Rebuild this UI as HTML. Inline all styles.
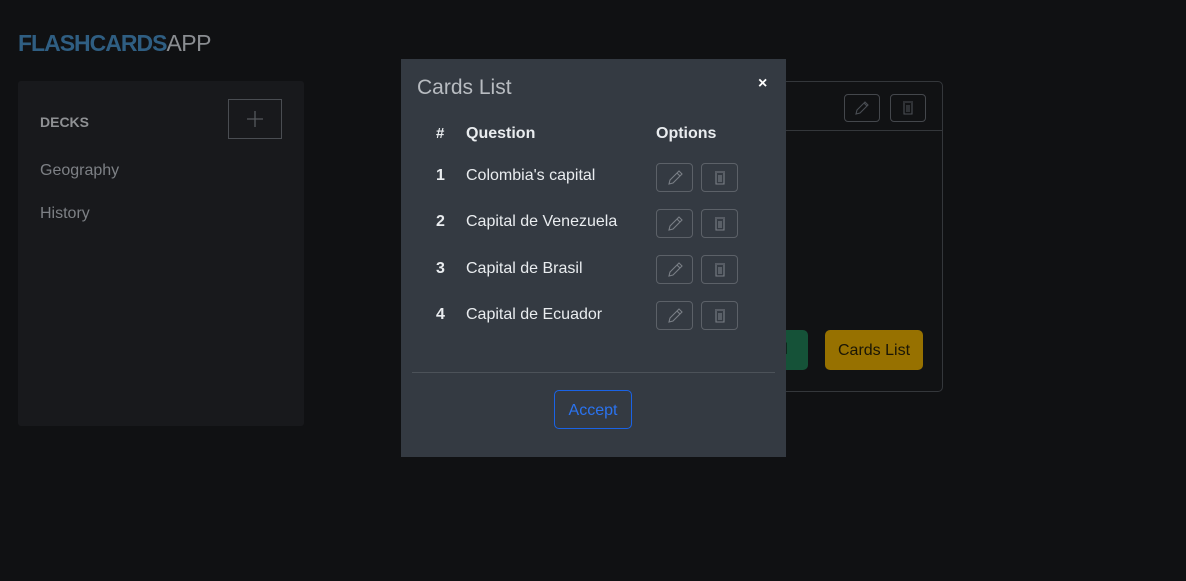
<!DOCTYPE html>
<html><head><style>
*{box-sizing:border-box;margin:0;padding:0}
body{width:1186px;height:581px;background:#101113;font-family:"Liberation Sans",sans-serif;position:relative;overflow:hidden}
.abs{position:absolute}
.logo{left:18px;top:30px;font-size:23px;letter-spacing:-1px}
.logo b{color:#2f5e82}
.logo span{color:#8a8d91;letter-spacing:-0.5px}
.side{left:18px;top:81px;width:286px;height:345px;background:#18191c;border-radius:3px}
.side .h{position:absolute;left:22px;top:33px;font-weight:bold;font-size:14px;color:#8f9194}
.side .add{position:absolute;left:210px;top:18px;width:54px;height:40px;border:1px solid #4a4d52}
.side .it{position:absolute;left:22px;font-size:16px;color:#7d8085}
.card{left:760px;top:81px;width:183px;height:311px;border:1px solid #34373b;border-radius:5px;background:#111214}
.btn-o{border:1px solid #44474c;border-radius:4px;width:36px;height:28px;position:absolute}
.modal{left:401px;top:59px;width:385px;height:398px;background:#343a42}
.t{position:absolute;color:#e9ecef;font-size:16px}
.th{font-weight:bold}
.ib{position:absolute;width:37px;height:29px;border:1px solid #5c6168;border-radius:4px}
</style></head><body>
<div class="abs logo"><b>FLASHCARDS</b><span>APP</span></div>
<div class="abs side">
<div class="h">DECKS</div>
<div class="add"><svg width="52" height="38"><path d="M26 11v16M18 19h16" stroke="#55585d" stroke-width="1.3"/></svg></div>
<div class="it" style="top:81px">Geography</div>
<div class="it" style="top:124px">History</div>
</div>
<div class="abs card">
<div style="position:absolute;left:0;right:0;top:48px;border-top:1px solid #34373b"></div>
<div class="btn-o" style="left:83px;top:12px"><svg width="34" height="26"><path d="M11 19l1-4 8-8 3 3-8 8zM19 8l3 3" stroke="#4a4e54" fill="none" stroke-width="1.1"/></svg></div>
<div class="btn-o" style="left:129px;top:12px"><svg width="34" height="26"><path d="M12 7h10M13 8v11h8V8M16 10v7M18 10v7" stroke="#4a4e54" fill="none" stroke-width="1.1"/></svg></div>
<div style="position:absolute;left:0;top:248px;width:47px;height:40px;background:#155238;border-radius:0 5px 5px 0;color:#0c1f16;font-size:16px;padding:11px 0 0 18px">d</div>
<div style="position:absolute;left:64px;top:248px;width:98px;height:40px;background:#977100;border-radius:5px;color:#1a1606;font-size:16px;text-align:center;line-height:42px">Cards List</div>
</div>
<div class="abs modal">
<div style="position:absolute;left:16px;top:17px;font-size:21px;color:#b8bcc1">Cards List</div>
<div style="position:absolute;left:357px;top:16px;font-size:16px;color:#fff;font-weight:bold">×</div>
<div class="t th" style="left:35px;top:66px;font-size:15px">#</div>
<div class="t th" style="left:65px;top:66px">Question</div>
<div class="t th" style="left:255px;top:66px">Options</div>
<div class="t th" style="left:35px;top:108px">1</div><div class="t" style="left:65px;top:108px">Colombia's capital</div>
<div class="t th" style="left:35px;top:154px">2</div><div class="t" style="left:65px;top:154px">Capital de Venezuela</div>
<div class="t th" style="left:35px;top:201px">3</div><div class="t" style="left:65px;top:201px">Capital de Brasil</div>
<div class="t th" style="left:35px;top:247px">4</div><div class="t" style="left:65px;top:247px">Capital de Ecuador</div>
<div style="position:absolute;left:11px;right:11px;top:313px;border-top:1px solid #4c5259"></div>
<div style="position:absolute;left:153px;top:331px;width:78px;height:39px;border:1px solid #1a63e6;border-radius:5px;color:#2a73f0;font-size:16px;text-align:center;line-height:39px">Accept</div>
</div>
<script>
const m=document.querySelector('.modal');
[104,150,196,242].forEach(y=>{
m.insertAdjacentHTML('beforeend',`<div class="ib" style="left:255px;top:${y}px"><svg width="35" height="27"><path d="M12 20l1-4 9-9 3 3-9 9zM20 9l3 3" stroke="#7a7f86" fill="none" stroke-width="1.1"/></svg></div><div class="ib" style="left:300px;top:${y}px"><svg width="35" height="27"><path d="M13 8h10M14 9v11h8V9M17 11v7M19 11v7" stroke="#7a7f86" fill="none" stroke-width="1.1"/></svg></div>`);
});
</script>
</body></html>
